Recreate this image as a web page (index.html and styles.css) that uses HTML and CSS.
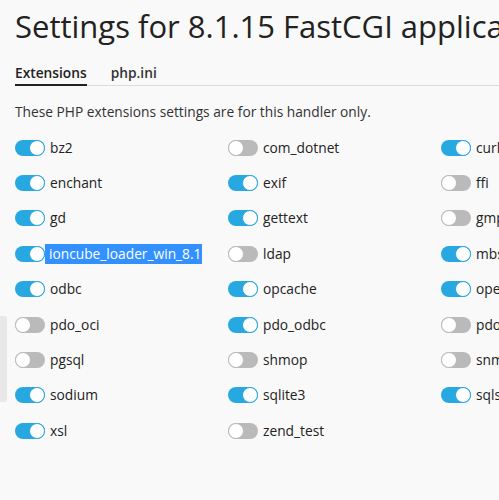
FILE: index.html
```html
<!DOCTYPE html>
<html>
<head>
<meta charset="utf-8">
<link rel="stylesheet" href="styles.css">
</head>
<body>
<div class="edge-handle"></div>
<main class="page">
  <h1 class="title">Settings for 8.1.15 FastCGI application</h1>
  <nav class="tabs">
    <span class="tab active">Extensions</span>
    <span class="tab">php.ini</span>
  </nav>
  <p class="hint">These PHP extensions settings are for this handler only.</p>
  <div class="grid">
    <label class="item"><span class="toggle on"></span><span class="name">bz2</span></label>
    <label class="item"><span class="toggle"></span><span class="name">com_dotnet</span></label>
    <label class="item"><span class="toggle on"></span><span class="name">curl</span></label>

    <label class="item"><span class="toggle on"></span><span class="name">enchant</span></label>
    <label class="item"><span class="toggle on"></span><span class="name">exif</span></label>
    <label class="item"><span class="toggle"></span><span class="name">ffi</span></label>

    <label class="item"><span class="toggle on"></span><span class="name">gd</span></label>
    <label class="item"><span class="toggle on"></span><span class="name">gettext</span></label>
    <label class="item"><span class="toggle"></span><span class="name">gmp</span></label>

    <label class="item"><span class="toggle on"></span><span class="name selected">ioncube_loader_win_8.1</span></label>
    <label class="item"><span class="toggle"></span><span class="name">ldap</span></label>
    <label class="item"><span class="toggle on"></span><span class="name">mbstring</span></label>

    <label class="item"><span class="toggle on"></span><span class="name">odbc</span></label>
    <label class="item"><span class="toggle on"></span><span class="name">opcache</span></label>
    <label class="item"><span class="toggle on"></span><span class="name">openssl</span></label>

    <label class="item"><span class="toggle"></span><span class="name">pdo_oci</span></label>
    <label class="item"><span class="toggle on"></span><span class="name">pdo_odbc</span></label>
    <label class="item"><span class="toggle"></span><span class="name">pdo_pgsql</span></label>

    <label class="item"><span class="toggle"></span><span class="name">pgsql</span></label>
    <label class="item"><span class="toggle"></span><span class="name">shmop</span></label>
    <label class="item"><span class="toggle"></span><span class="name">snmp</span></label>

    <label class="item"><span class="toggle on"></span><span class="name">sodium</span></label>
    <label class="item"><span class="toggle on"></span><span class="name">sqlite3</span></label>
    <label class="item"><span class="toggle on"></span><span class="name">sqlsrv</span></label>

    <label class="item"><span class="toggle on"></span><span class="name">xsl</span></label>
    <label class="item"><span class="toggle"></span><span class="name">zend_test</span></label>
  </div>
</main>
</body>
</html>
```

FILE: styles.css
```css
html, body {
  margin: 0;
  padding: 0;
  background: #f9f9f9;
  overflow: hidden;
}
body {
  font-family: "Open Sans", "Noto Sans", sans-serif;
  color: #222;
  width: 499px;
  height: 500px;
  position: relative;
}
.edge-handle {
  position: absolute;
  left: -4px;
  top: 316px;
  width: 11px;
  height: 86px;
  border-radius: 3px;
  background: #e8e8e8;
}
.page {
  padding: 0 0 0 15px;
  white-space: nowrap;
}
.title {
  margin: 0;
  padding-top: 4px;
  font-size: 31px;
  font-weight: 400;
  line-height: 44px;
  color: #222;
  white-space: nowrap;
}
.tabs {
  display: flex;
  gap: 24px;
  margin-top: 15px;
  border-bottom: 1px solid #dcdcdc;
  height: 22px;
}
.tab {
  font-size: 13.75px;
  font-weight: 600;
  color: #333;
  line-height: 18px;
  padding-top: 1px;
  height: 22px;
  box-sizing: border-box;
}
.tab.active {
  color: #222;
  border-bottom: 2px solid #222;
  height: 23px;
}
.hint {
  margin: 17px 0 0;
  font-size: 13.75px;
  line-height: 18px;
  color: #333;
}
.grid {
  display: grid;
  grid-template-columns: 213px 213px 213px;
  grid-auto-rows: 35.4px;
  margin-top: 9px;
}
.item {
  display: flex;
  align-items: center;
  gap: 4px;
  font-size: 13.75px;
}
.toggle {
  position: relative;
  width: 30px;
  height: 16px;
  border-radius: 8px;
  background: #bababa;
  flex: none;
}
.toggle::after {
  content: "";
  position: absolute;
  top: 0;
  left: 0;
  width: 14px;
  height: 14px;
  border-radius: 50%;
  background: #fff;
  border: 1px solid #bababa;
}
.toggle.on {
  background: #28a8e0;
}
.toggle.on::after {
  left: 14px;
  border-color: #28a8e0;
}
.name {
  color: #222;
  line-height: 20px;
  padding: 0 1px;
}
.name.selected {
  background: #3391ff;
  color: #fff;
  margin-left: -4px;
  padding: 0 1px 0 4px;
}
```
